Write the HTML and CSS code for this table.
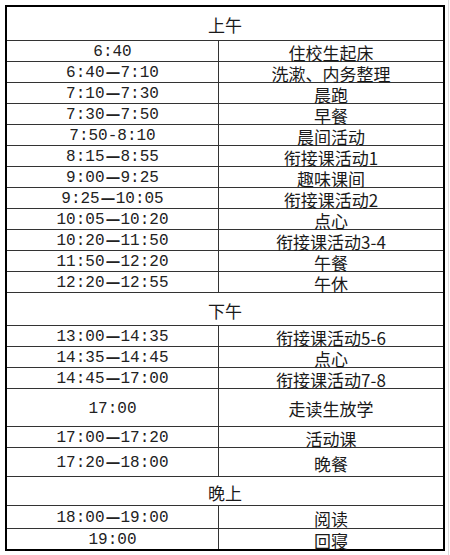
FILE: index.html
```html
<!DOCTYPE html>
<html lang="zh-CN">
<head>
<meta charset="utf-8">
<title>作息时间表</title>
<link rel="stylesheet" href="styles.css">
</head>
<body>
<div class="page">
  <div class="sheet">
    <div class="cell span h-34">上午</div>
    <div class="cell time">6:40</div><div class="cell">住校生起床</div>
    <div class="cell time">6:40<span class="dash">—</span>7:10</div><div class="cell">洗漱、内务整理</div>
    <div class="cell time">7:10<span class="dash">—</span>7:30</div><div class="cell">晨跑</div>
    <div class="cell time">7:30<span class="dash">—</span>7:50</div><div class="cell">早餐</div>
    <div class="cell time">7:50-8:10</div><div class="cell">晨间活动</div>
    <div class="cell time">8:15<span class="dash">—</span>8:55</div><div class="cell">衔接课活动1</div>
    <div class="cell time">9:00<span class="dash">—</span>9:25</div><div class="cell">趣味课间</div>
    <div class="cell time">9:25<span class="dash">—</span>10:05</div><div class="cell">衔接课活动2</div>
    <div class="cell time">10:05<span class="dash">—</span>10:20</div><div class="cell">点心</div>
    <div class="cell time">10:20<span class="dash">—</span>11:50</div><div class="cell">衔接课活动3-4</div>
    <div class="cell time">11:50<span class="dash">—</span>12:20</div><div class="cell">午餐</div>
    <div class="cell time">12:20<span class="dash">—</span>12:55</div><div class="cell">午休</div>
    <div class="cell span h-33">下午</div>
    <div class="cell time">13:00<span class="dash">—</span>14:35</div><div class="cell">衔接课活动5-6</div>
    <div class="cell time">14:35<span class="dash">—</span>14:45</div><div class="cell">点心</div>
    <div class="cell time">14:45<span class="dash">—</span>17:00</div><div class="cell">衔接课活动7-8</div>
    <div class="cell time h-38">17:00</div><div class="cell h-38">走读生放学</div>
    <div class="cell time">17:00<span class="dash">—</span>17:20</div><div class="cell">活动课</div>
    <div class="cell time h-29">17:20<span class="dash">—</span>18:00</div><div class="cell h-29">晚餐</div>
    <div class="cell span h-29">晚上</div>
    <div class="cell time h-23">18:00<span class="dash">—</span>19:00</div><div class="cell h-23">阅读</div>
    <div class="cell time last">19:00</div><div class="cell last">回寝</div>
  </div>
</div>
</body>
</html>
```
FILE: styles.css
```css
* {
  box-sizing: border-box;
}

body {
  margin: 0;
  background: #fff;
}

.page {
  width: 449px;
  height: 555px;
  padding: 5px 0 0 5px;
  border-right: 1px solid #dcdcdc;
}

.sheet {
  display: grid;
  grid-template-columns: 212px 224px;
  width: 440px;
  border: 2px solid #000;
  color: #1a1a1a;
  font-family: "Noto Sans CJK SC", sans-serif;
  font-size: 17px;
}

.cell {
  height: 21px;
  display: flex;
  align-items: center;
  justify-content: center;
  padding-top: 2px;
  border-bottom: 1px solid #333;
  line-height: 1;
  white-space: nowrap;
}

.time {
  border-right: 1px solid #333;
  font-family: "Liberation Mono", monospace;
  font-size: 16px;
  color: #222;
}

.dash {
  display: inline-block;
  width: 16px;
  text-align: center;
  font-weight: bold;
  transform: scaleX(1.35);
}

.span {
  grid-column: 1 / -1;
}

.h-34 { height: 34px; }
.h-33 { height: 33px; }
.h-38 { height: 38px; }
.h-29 { height: 29px; }
.h-23 { height: 23px; }

.last {
  height: 20px;
  border-bottom: none;
}
```
